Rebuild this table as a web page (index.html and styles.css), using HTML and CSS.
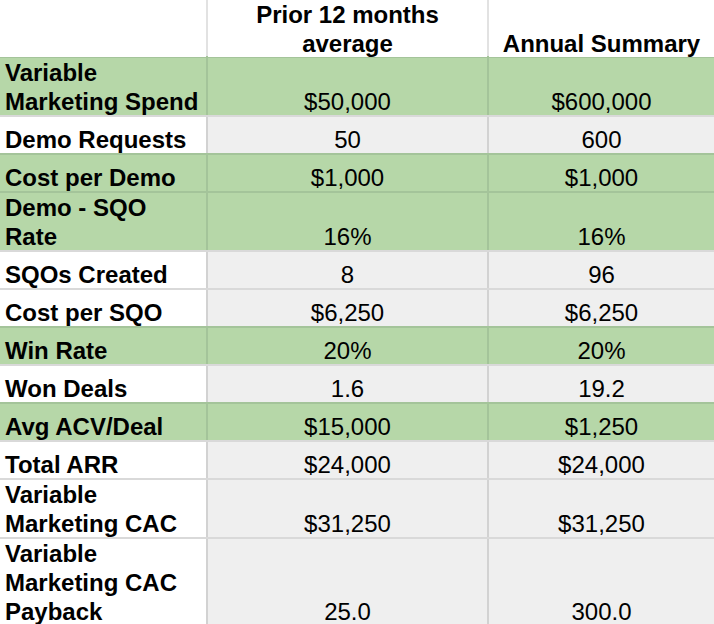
FILE: index.html
```html
<!DOCTYPE html>
<html>
<head>
<meta charset="utf-8">
<link rel="stylesheet" href="styles.css">
</head>
<body>
<div class="sheet">
  <div class="row hdr">
    <div class="cell lab"></div>
    <div class="cell val"><div class="txt b">Prior 12 months<br>average</div></div>
    <div class="cell val"><div class="txt b">Annual Summary</div></div>
  </div>
  <div class="row g two">
    <div class="cell lab"><div class="txt b">Variable<br>Marketing Spend</div></div>
    <div class="cell val"><div class="txt">$50,000</div></div>
    <div class="cell val"><div class="txt">$600,000</div></div>
  </div>
  <div class="row w one">
    <div class="cell lab"><div class="txt b">Demo Requests</div></div>
    <div class="cell val"><div class="txt">50</div></div>
    <div class="cell val"><div class="txt">600</div></div>
  </div>
  <div class="row g one">
    <div class="cell lab"><div class="txt b">Cost per Demo</div></div>
    <div class="cell val"><div class="txt">$1,000</div></div>
    <div class="cell val"><div class="txt">$1,000</div></div>
  </div>
  <div class="row g two">
    <div class="cell lab"><div class="txt b">Demo - SQO<br>Rate</div></div>
    <div class="cell val"><div class="txt">16%</div></div>
    <div class="cell val"><div class="txt">16%</div></div>
  </div>
  <div class="row w one">
    <div class="cell lab"><div class="txt b">SQOs Created</div></div>
    <div class="cell val"><div class="txt">8</div></div>
    <div class="cell val"><div class="txt">96</div></div>
  </div>
  <div class="row w one">
    <div class="cell lab"><div class="txt b">Cost per SQO</div></div>
    <div class="cell val"><div class="txt">$6,250</div></div>
    <div class="cell val"><div class="txt">$6,250</div></div>
  </div>
  <div class="row g one">
    <div class="cell lab"><div class="txt b">Win Rate</div></div>
    <div class="cell val"><div class="txt">20%</div></div>
    <div class="cell val"><div class="txt">20%</div></div>
  </div>
  <div class="row w one">
    <div class="cell lab"><div class="txt b">Won Deals</div></div>
    <div class="cell val"><div class="txt">1.6</div></div>
    <div class="cell val"><div class="txt">19.2</div></div>
  </div>
  <div class="row g one">
    <div class="cell lab"><div class="txt b">Avg ACV/Deal</div></div>
    <div class="cell val"><div class="txt">$15,000</div></div>
    <div class="cell val"><div class="txt">$1,250</div></div>
  </div>
  <div class="row w one">
    <div class="cell lab"><div class="txt b">Total ARR</div></div>
    <div class="cell val"><div class="txt">$24,000</div></div>
    <div class="cell val"><div class="txt">$24,000</div></div>
  </div>
  <div class="row w two">
    <div class="cell lab"><div class="txt b">Variable<br>Marketing CAC</div></div>
    <div class="cell val"><div class="txt">$31,250</div></div>
    <div class="cell val"><div class="txt">$31,250</div></div>
  </div>
  <div class="row w three">
    <div class="cell lab"><div class="txt b">Variable<br>Marketing CAC<br>Payback</div></div>
    <div class="cell val"><div class="txt">25.0</div></div>
    <div class="cell val"><div class="txt">300.0</div></div>
  </div>
</div>
</body>
</html>
```
FILE: styles.css
```css
html, body {
  margin: 0;
  padding: 0;
  background: #ffffff;
  overflow: hidden;
}

.sheet {
  width: 714px;
  font-family: "Liberation Sans", Arial, sans-serif;
  font-size: 24px;
  line-height: 29px;
  color: #000000;
}

.row {
  display: grid;
  grid-template-columns: 206px 279px 1fr;
  column-gap: 2px;
}

.row.hdr {
  height: 56px;
  background: #e2e2e2;
}

.row.g {
  background: #a4c49a;
  border-top: 2px solid #a4c49a;
}

.row.w {
  background: #d2d2d2;
  border-top: 2px solid #d9d9d9;
}

.row.one { height: 36px; }
.row.two { height: 57px; }
.row.three { height: 88px; }

.cell {
  display: flex;
  flex-direction: column;
  justify-content: flex-end;
  overflow: visible;
  min-width: 0;
}

.hdr .cell { background: #ffffff; }
.g .cell { background: #b6d7a8; }
.w .cell { background: #efefef; }
.w .cell.lab { background: #ffffff; }

.cell.lab {
  padding-left: 5px;
  text-align: left;
}

.cell.val {
  text-align: center;
}

.txt {
  margin-bottom: -1px;
  white-space: nowrap;
}

.three .txt {
  margin-bottom: 3px;
}

.txt.b {
  font-weight: bold;
}
```
